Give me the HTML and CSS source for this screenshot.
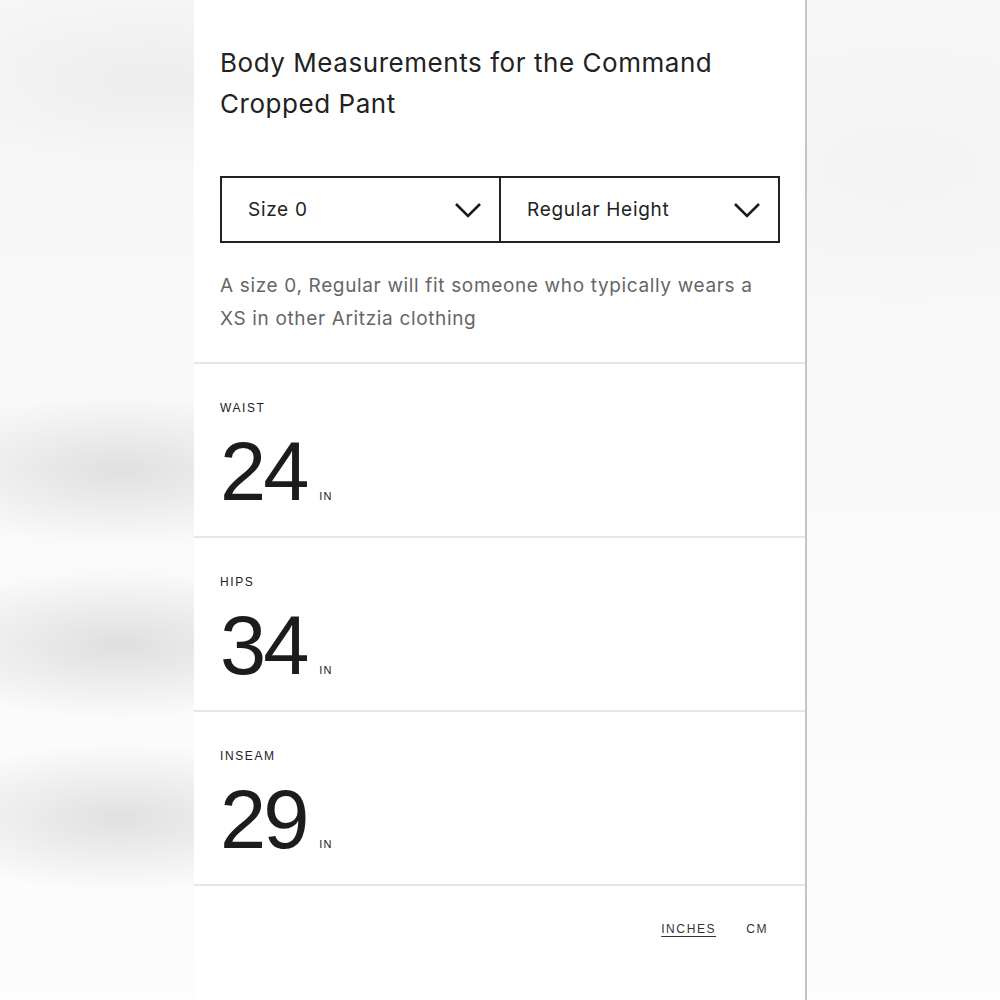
FILE: index.html
```html
<!DOCTYPE html>
<html lang="en">
<head>
    <meta charset="UTF-8">
    <meta name="viewport" content="width=device-width, initial-scale=1.0">
    <title>Body Measurements</title>
    <link rel="stylesheet" href="styles.css">
</head>
<body>
    <div class="panel">
        <div class="intro">
            <h1 class="title">Body Measurements for the Command Cropped Pant</h1>

            <div class="selects">
                <div class="select">
                    <span>Size 0</span>
                    <svg class="chevron" width="28" height="16" viewBox="0 0 28 16"><polyline points="2,2 14,14 26,2" fill="none" stroke="#1a1a1a" stroke-width="2.6"/></svg>
                </div>
                <div class="select">
                    <span>Regular Height</span>
                    <svg class="chevron" width="28" height="16" viewBox="0 0 28 16"><polyline points="2,2 14,14 26,2" fill="none" stroke="#1a1a1a" stroke-width="2.6"/></svg>
                </div>
            </div>

            <p class="note">A size 0, Regular will fit someone who typically wears a XS in other Aritzia clothing</p>
        </div>

        <div class="measure">
            <div class="label">WAIST</div>
            <div class="value"><span class="num">24</span><span class="unit">IN</span></div>
        </div>
        <div class="measure">
            <div class="label">HIPS</div>
            <div class="value"><span class="num">34</span><span class="unit">IN</span></div>
        </div>
        <div class="measure">
            <div class="label">INSEAM</div>
            <div class="value"><span class="num">29</span><span class="unit">IN</span></div>
        </div>

        <div class="units">
            <a class="unit-link active">INCHES</a>
            <a class="unit-link">CM</a>
        </div>
    </div>
</body>
</html>
```

FILE: styles.css
```css
body {
    margin: 0;
    height: 1000px;
    display: flex;
    justify-content: center;
    font-family: "Inter", "Liberation Sans", sans-serif;
    color: #222;
    overflow: hidden;
    background-color: #fafafa;
    background-image:
        radial-gradient(ellipse 220px 75px at 120px 470px, #e0e0e0, rgba(224,224,224,0)),
        radial-gradient(ellipse 220px 75px at 120px 645px, #dfdfdf, rgba(223,223,223,0)),
        radial-gradient(ellipse 220px 75px at 120px 818px, #e0e0e0, rgba(224,224,224,0)),
        radial-gradient(ellipse 240px 90px at 150px 80px, #ededed, rgba(237,237,237,0)),
        radial-gradient(ellipse 260px 140px at 900px 170px, #f3f3f3, rgba(243,243,243,0)),
        linear-gradient(#f6f6f6, #fafafa 60%, #fdfdfd);
}
.panel {
    width: 613px;
    height: 1000px;
    box-sizing: border-box;
    background: #fff;
    border-right: 2px solid #c4c4c4;
    margin-left: 1px;
}
.intro {
    padding: 42px 25px 27px 26px;
    border-bottom: 2px solid #e6e6e6;
}
.title {
    margin: 0;
    font-size: 26px;
    font-weight: 400;
    line-height: 41px;
    letter-spacing: 0.55px;
    color: #222;
    max-width: 540px;
}
.selects {
    display: flex;
    margin-top: 52px;
    border: 2px solid #222;
    height: 63px;
}
.select {
    flex: 1;
    display: flex;
    align-items: center;
    justify-content: space-between;
    padding: 0 17px 0 26px;
    font-size: 19px;
    letter-spacing: 0.7px;
}
.select + .select {
    border-left: 2px solid #222;
}
.note {
    margin: 26px 0 0;
    font-size: 19px;
    line-height: 33px;
    letter-spacing: 0.65px;
    color: #666;
}
.measure {
    padding: 36px 26px 24px;
    border-bottom: 2px solid #e6e6e6;
    height: 112px;
}
.label {
    font-family: "Liberation Sans", sans-serif;
    font-size: 12px;
    line-height: 16px;
    letter-spacing: 1.6px;
    color: #222;
}
.value {
    display: flex;
    align-items: baseline;
    margin-top: 14px;
}
.num {
    font-family: "Liberation Sans", sans-serif;
    font-size: 83px;
    line-height: 83px;
    letter-spacing: -3px;
    color: #1c1c1c;
}
.unit {
    font-family: "Liberation Sans", sans-serif;
    font-size: 11px;
    letter-spacing: 1px;
    margin-left: 13px;
}
.units {
    display: flex;
    justify-content: flex-end;
    gap: 30px;
    padding: 36px 37px 0 0;
}
.unit-link {
    font-family: "Liberation Sans", sans-serif;
    font-size: 12px;
    letter-spacing: 1.6px;
    color: #333;
}
.unit-link.active {
    text-decoration: underline;
    text-underline-offset: 3px;
}
```
